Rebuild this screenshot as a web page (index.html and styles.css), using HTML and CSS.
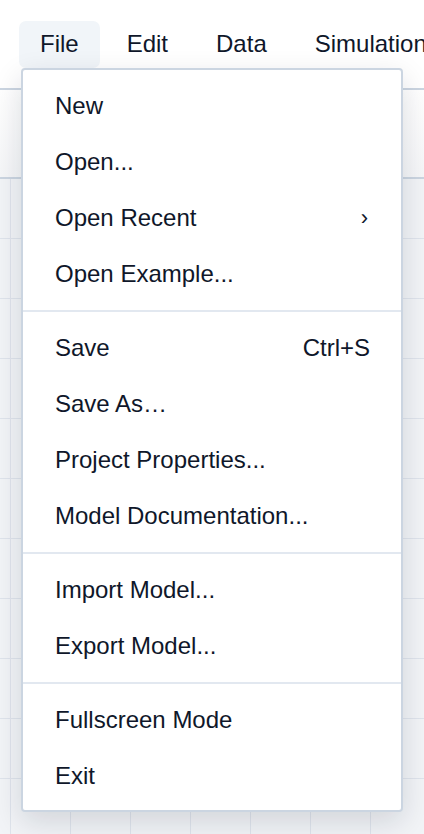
FILE: index.html
```html
<!DOCTYPE html>
<html>
  <head>
    <meta charset="utf-8">
    <meta name="viewport" content="width=device-width, initial-scale=1">
    <title>Model Editor</title>
    <link rel="stylesheet" href="styles.css">
  </head>
  <body>
    <div class="app">
      <!-- 菜单栏 -->
      <nav class="menubar">
        <span class="menubar-sep"></span>
        <button class="menubar-item active">File</button>
        <button class="menubar-item">Edit</button>
        <button class="menubar-item">Data</button>
        <button class="menubar-item">Simulation</button>
      </nav>
      <!-- 工具栏 -->
      <div class="toolbar"></div>
      <!-- 画布 -->
      <div class="canvas"></div>

      <!-- File 下拉菜单 -->
      <div class="dropdown">
        <div class="dropdown-item">New</div>
        <div class="dropdown-item">Open...</div>
        <div class="dropdown-item">Open Recent <span class="chevron">›</span></div>
        <div class="dropdown-item">Open Example...</div>
        <div class="dropdown-sep"></div>
        <div class="dropdown-item">Save <span class="shortcut">Ctrl+S</span></div>
        <div class="dropdown-item">Save As…</div>
        <div class="dropdown-item">Project Properties...</div>
        <div class="dropdown-item">Model Documentation...</div>
        <div class="dropdown-sep"></div>
        <div class="dropdown-item">Import Model...</div>
        <div class="dropdown-item">Export Model...</div>
        <div class="dropdown-sep"></div>
        <div class="dropdown-item">Fullscreen Mode</div>
        <div class="dropdown-item">Exit</div>
      </div>
    </div>
  </body>
</html>
```

FILE: styles.css
```css
html, body {
  margin: 0;
  height: 100%;
  overflow: hidden;
}
body {
  font-family: "Liberation Sans", Arial, sans-serif;
  color: #0f172a;
  background: #f2f4f7;
}
.app {
  position: relative;
  display: flex;
  flex-direction: column;
  height: 100%;
}
/* -------- 菜单栏 ------------- */
.menubar {
  display: flex;
  align-items: center;
  gap: 5.5px;
  height: 88px;
  padding-left: 6px;
  background: #fff;
  border-bottom: 2px solid #cbd5e1;
  white-space: nowrap;
}
.menubar-sep {
  width: 2px;
  height: 32px;
  background: #e5e7eb;
  margin-right: 7.5px;
}
.menubar-item {
  height: 47px;
  padding: 0 21.5px 0 21px;
  border: 0;
  border-radius: 7px;
  background: transparent;
  font: inherit;
  font-size: 24px;
  color: #0f172a;
  flex-shrink: 0;
}
.menubar-item.active {
  background: #f1f5f9;
}
/* -------- 工具栏 ------------- */
.toolbar {
  height: 87px;
  background: linear-gradient(#ffffff, #f5f6f8);
  border-bottom: 2px solid #cbd5e1;
}
/* -------- 画布网格 ------------- */
.canvas {
  flex: 1;
  background-color: #f2f4f7;
  background-image:
    linear-gradient(to right, #dfe4ec 1px, transparent 1px),
    linear-gradient(to bottom, #dfe4ec 1px, transparent 1px);
  background-size: 60px 60px;
  background-position: 10px 59px;
}
/* -------- 下拉菜单 ------------- */
.dropdown {
  position: absolute;
  top: 68px;
  left: 21px;
  width: 378px;
  padding: 8px 0 6px;
  background: #fff;
  border: 2px solid #cbd5e1;
  border-radius: 4px;
  box-shadow: 0 10px 30px rgba(15, 23, 42, .14);
}
.dropdown-item {
  display: flex;
  align-items: center;
  justify-content: space-between;
  height: 56px;
  padding: 0 31px 0 32px;
  font-size: 24px;
}
.chevron {
  font-size: 22px;
  padding-right: 2px;
}
.dropdown-sep {
  height: 2px;
  margin: 8px 0;
  background: #e2e8f0;
}
```
